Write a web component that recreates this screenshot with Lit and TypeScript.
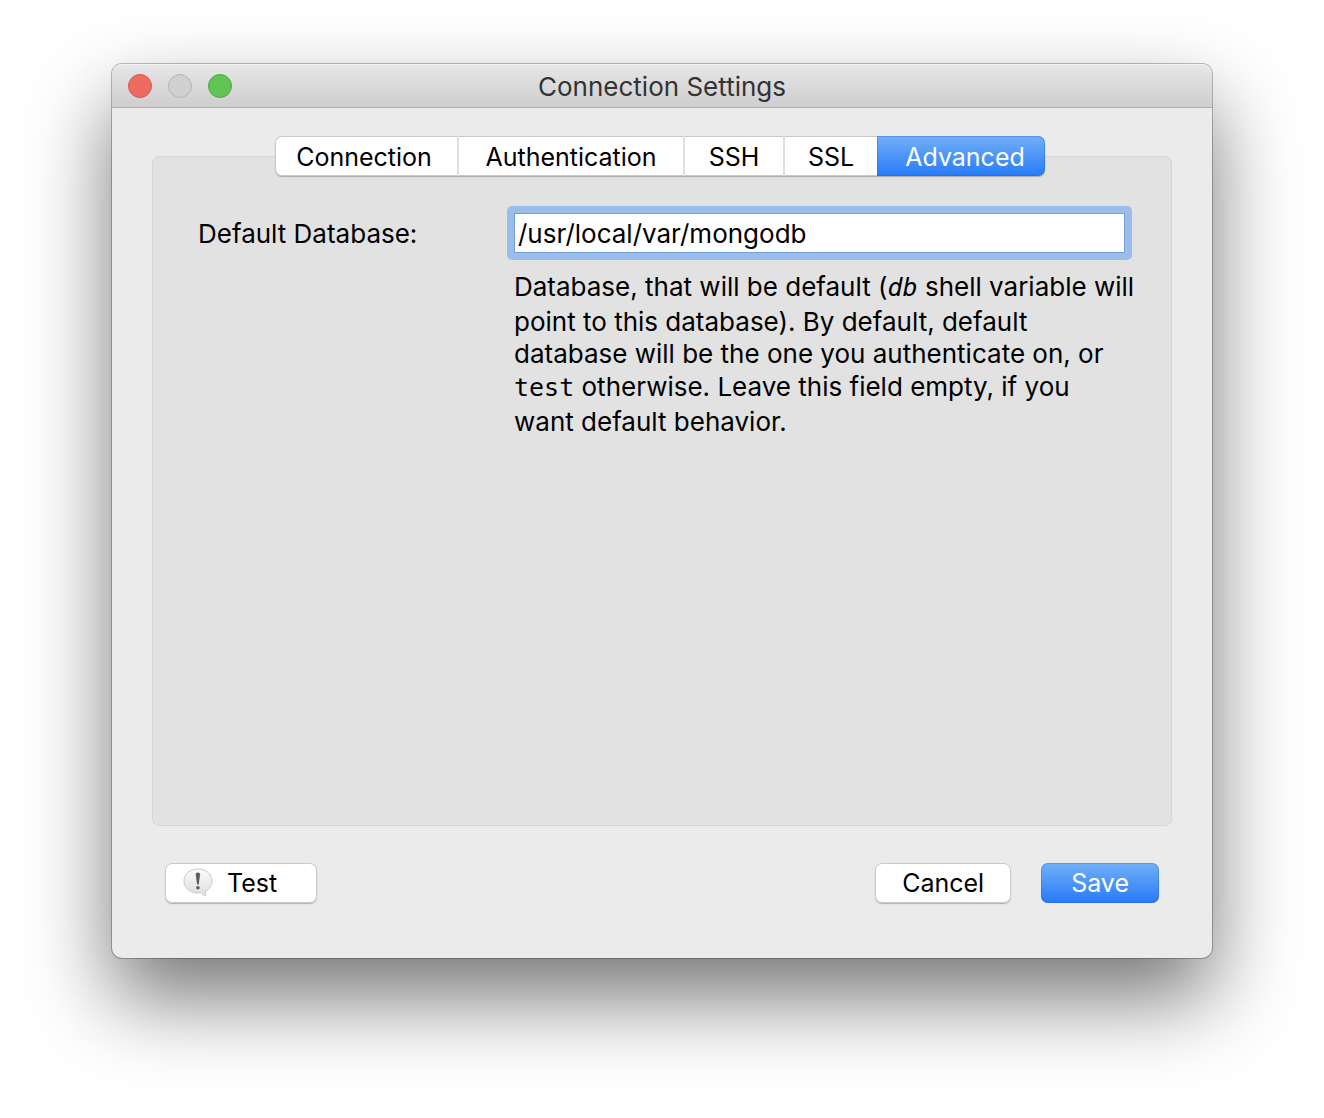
import { LitElement, html, css, svg } from "lit";
import { customElement, state } from "lit/decorators.js";
import { classMap } from "lit/directives/class-map.js";

const TABS = ["Connection", "Authentication", "SSH", "SSL", "Advanced"];

const alertBubble = svg`
  <defs>
    <linearGradient id="bubble-fill" x1="0" y1="0" x2="0" y2="1">
      <stop offset="0" stop-color="#fbfbfb" />
      <stop offset="1" stop-color="#dedede" />
    </linearGradient>
  </defs>
  <path
    d="M15 1C7 1 1 6 1 13s6 12 14 12c1 0 2-.1 3-.3 1.200 1.500 2.600 2.500 4.800 3.100-.5-1.500-.5-3-.3-4.600C26.800 21 29 17.500 29 13 29 6 23 1 15 1Z"
    fill="url(#bubble-fill)" stroke="#cacaca" stroke-width="1" />
  <path d="M12.700 6.500c0-2.700 4.400-2.700 4.400 0L15.700 16.500h-1.600Z" fill="#5c5c5c" />
  <circle cx="14.900" cy="19.700" r="1.800" fill="#5c5c5c" />
`;

@customElement("app-root")
export class AppRoot extends LitElement {
  static styles = css`
    :host {
      display: flex;
      flex-direction: column;
      box-sizing: border-box;
      min-height: 100vh;
      padding: 64px 112px 160px;
      background: #fff;
      color: #000;
      font: 26px/32px Inter, "Liberation Sans", sans-serif;
      overflow: hidden;
    }
    button,
    input {
      box-sizing: border-box;
      margin: 0;
      font: inherit;
      color: inherit;
      outline: none;
    }
    .window {
      flex: 1;
      display: flex;
      flex-direction: column;
      border-radius: 10px;
      background: #ebebeb;
      box-shadow: 0 0 0 1px rgba(0, 0, 0, 0.25), 0 40px 84px rgba(0, 0, 0, 0.54);
    }
    .titlebar {
      display: grid;
      grid-template-columns: 1fr auto 1fr;
      align-items: center;
      box-sizing: border-box;
      height: 44px;
      padding: 0 16px;
      border-radius: 10px 10px 0 0;
      border-bottom: 1px solid #b0b0b0;
      background: linear-gradient(#e7e7e7, #cecece);
      box-shadow: inset 0 1px 0 #f3f3f3;
    }
    .lights {
      display: flex;
      gap: 16px;
    }
    .light {
      width: 24px;
      height: 24px;
      padding: 0;
      border: 1px solid #b4b4b4;
      border-radius: 50%;
      background: #d0d0d0;
    }
    .light.close {
      border-color: #d9564b;
      background: #ee6b60;
    }
    .light.zoom {
      border-color: #4aa83f;
      background: #61c555;
    }
    .title {
      margin: 0;
      padding-top: 2px;
      font-size: 26px;
      font-weight: 400;
      color: #333;
    }
    .content {
      flex: 1;
      display: flex;
      flex-direction: column;
      padding: 28px 40px 55px;
    }
    .tabs {
      z-index: 1;
      align-self: center;
      display: grid;
      grid-template-columns: 184px 226px 100px 92px 168px;
      height: 40px;
      margin: 0 4px -20px 0;
    }
    .tabs,
    .push {
      border-radius: 7px;
      background: #fff;
      box-shadow: inset 0 0 0 1px #c9c9c9, 0 1px 1px rgba(0, 0, 0, 0.25);
    }
    .tab {
      padding: 2px 0 0;
      border: 0;
      border-right: 2px solid #e0e0e0;
      background: none;
      font-size: 25px;
    }
    .tab:first-child {
      padding-right: 4px;
    }
    .tab:nth-last-child(-n + 2) {
      border-right: 0;
    }
    .tab:last-child {
      padding-left: 8px;
    }
    .tab.active {
      border-radius: 0 7px 7px 0;
      color: #fff;
    }
    .tab.active,
    .push.primary {
      background: linear-gradient(#72b0f8, #277af8);
      box-shadow: inset 0 0 0 1px rgba(20, 90, 200, 0.3);
    }
    .panel {
      flex: 1;
      display: grid;
      grid-template-columns: 316px minmax(0, 1fr);
      align-content: start;
      row-gap: 16px;
      padding: 56px 46px 56px 45px;
      border: 1px solid #d6d6d6;
      border-radius: 7px;
      background: #e2e2e2;
    }
    .label {
      padding-top: 1px;
      line-height: 40px;
    }
    .focus-ring {
      align-self: start;
      display: flex;
      margin: -7px;
      padding: 7px;
      border-radius: 5px;
      background: #9abde9;
    }
    .field {
      flex: 1;
      min-width: 0;
      height: 40px;
      padding: 1px 3px 0;
      border: 1px solid #73a0d8;
      border-radius: 0;
      background: #fff;
    }
    .hint {
      grid-column: 2;
      margin: 0;
      white-space: nowrap;
    }
    .hint code {
      font: 25px/36px "DejaVu Sans Mono", monospace;
    }
    .hint .variable {
      font-style: italic;
    }
    .actions {
      display: flex;
      align-items: center;
      gap: 30px;
      padding: 37px 13px 0;
    }
    .push {
      display: flex;
      align-items: center;
      justify-content: center;
      height: 40px;
      padding: 0 27px;
      border: 0;
      font-size: 25px;
    }
    .push.primary {
      padding: 0 30px;
      color: #fff;
    }
    .push.test {
      gap: 14px;
      margin-right: auto;
      padding: 0 40px 0 18px;
    }
    .icon {
      width: 30px;
      height: 30px;
    }
  `;

  @state() private active = "Advanced";

  render() {
    return html`
      <main class="window">
        <header class="titlebar">
          <div class="lights">
            <button class="light close" aria-label="Close"></button>
            <button class="light" aria-label="Minimize" disabled></button>
            <button class="light zoom" aria-label="Zoom"></button>
          </div>
          <h1 class="title">Connection Settings</h1>
        </header>
        <div class="content">
          <div class="tabs" role="tablist">
            ${TABS.map(
              (tab) => html`<button
                class=${classMap({ tab: true, active: tab === this.active })}
                role="tab"
                aria-selected=${tab === this.active}
                @click=${() => (this.active = tab)}
              >${tab}</button>`
            )}
          </div>
          <section class="panel">
            <label class="label" for="database">Default Database:</label>
            <div class="focus-ring">
              <input class="field" id="database" type="text" value="/usr/local/var/mongodb" spellcheck="false" />
            </div>
            <p class="hint">
              Database, that will be default (<code class="variable">db</code> shell variable will<br />
              point to this database). By default, default<br />
              database will be the one you authenticate on, or<br />
              <code>test</code> otherwise. Leave this field empty, if you<br />
              want default behavior.
            </p>
          </section>
          <footer class="actions">
            <button class="push test">
              <svg class="icon" viewBox="0 0 30 30" aria-hidden="true">${alertBubble}</svg>
              Test
            </button>
            <button class="push">Cancel</button>
            <button class="push primary">Save</button>
          </footer>
        </div>
      </main>
    `;
  }
}
